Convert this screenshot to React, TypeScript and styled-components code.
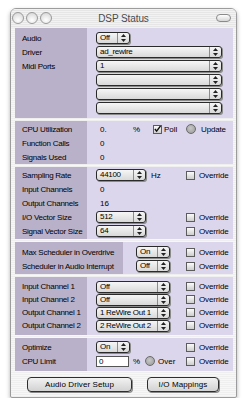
import React from 'react';
import styled, { createGlobalStyle } from 'styled-components';

const FONT = '"Liberation Sans", Arial, sans-serif';

const GlobalStyle = createGlobalStyle`
  html, body {
    margin: 0;
    padding: 0;
    background: #ffffff;
  }
  body {
    font-family: ${FONT};
    -webkit-font-smoothing: antialiased;
  }
`;

const Window = styled.div`
  box-sizing: border-box;
  width: 227px;
  margin: 8px 0 0 10px;
  border: 1px solid #9c9c9c;
  border-radius: 6px 6px 2px 2px;
  background: repeating-linear-gradient(180deg, #f7f7f7 0px, #f7f7f7 1px, #efefef 1px, #efefef 2px);
  box-shadow: 0 2px 4px rgba(0, 0, 0, 0.3);
  overflow: hidden;
`;

const TitleBar = styled.div`
  position: relative;
  height: 19px;
  display: flex;
  align-items: center;
  justify-content: center;
  background: repeating-linear-gradient(180deg, #f2f2f2 0px, #f2f2f2 1px, #e6e6e6 1px, #e6e6e6 2px);
`;

const Lights = styled.div`
  position: absolute;
  left: 1px;
  top: 3px;
  display: flex;
  gap: 2px;
`;

const Light = styled.span`
  box-sizing: border-box;
  width: 12px;
  height: 12px;
  border-radius: 50%;
  border: 1px solid #9a9a9a;
  background: radial-gradient(circle at 50% 70%, #ffffff 0%, #e4e4e4 60%, #cfcfcf 100%);
`;

const Pill = styled.span`
  position: absolute;
  right: 5px;
  top: 5px;
  box-sizing: border-box;
  width: 15px;
  height: 8px;
  border-radius: 4px;
  border: 1px solid #8a8a8a;
  background: linear-gradient(#ffffff, #d6d6d6);
`;

const Title = styled.div`
  font-size: 10px;
  color: #4a4a4a;
  letter-spacing: -0.1px;
`;

const Body = styled.div`
  padding: 0 3px 5px 4px;
`;

const Panel = styled.div<{ $lw: number; $pt: number; $pb: number }>`
  --lw: ${(p) => p.$lw}px;
  background: linear-gradient(90deg, #b9b1c9 0, #b9b1c9 var(--lw), #dcd6ec var(--lw), #dcd6ec 100%);
  padding: ${(p) => p.$pt}px 0 ${(p) => p.$pb}px;
  & + & {
    margin-top: 3px;
  }
`;

const Row = styled.div<{ $h?: number }>`
  display: grid;
  grid-template-columns: var(--lw) 1fr 47px;
  height: ${(p) => p.$h ?? 14}px;
  align-items: center;
`;

const Label = styled.div`
  padding-left: 7px;
  font-size: 8px;
  letter-spacing: -0.25px;
  color: #000;
  white-space: nowrap;
`;

const Value = styled.div<{ $pad?: number }>`
  display: flex;
  align-items: center;
  padding-left: ${(p) => p.$pad ?? 9}px;
  font-size: 8px;
  color: #000;
  white-space: nowrap;
`;

const Side = styled.div`
  display: flex;
  align-items: center;
  gap: 2px;
  font-size: 8px;
  letter-spacing: -0.15px;
  color: #000;
  white-space: nowrap;
`;

const PopupBox = styled.div<{ $w: number }>`
  box-sizing: border-box;
  width: ${(p) => p.$w}px;
  height: 12px;
  display: flex;
  border: 1px solid #2a2a2a;
  border-radius: 3px;
  background: linear-gradient(#f6f6f6, #d9d9d9);
  box-shadow: 1px 1px 0 #8a8a8a;
  overflow: hidden;
`;

const PopupText = styled.span`
  flex: 1;
  padding-left: 3px;
  font-size: 8px;
  line-height: 10px;
  letter-spacing: -0.3px;
  color: #000;
  white-space: nowrap;
  overflow: hidden;
`;

const PopupArrow = styled.span`
  width: 11px;
  display: flex;
  align-items: center;
  justify-content: center;
  border-left: 1px solid #8c8c8c;
`;

const Num = styled.span<{ $w: number }>`
  display: inline-block;
  width: ${(p) => p.$w}px;
`;

const Check = styled.span`
  box-sizing: border-box;
  width: 9px;
  height: 9px;
  display: inline-flex;
  align-items: center;
  justify-content: center;
  border: 1px solid #5c5c5c;
  background: linear-gradient(#fbfbfb, #cdcdcd);
  margin-right: 2px;
`;

const Led = styled.span`
  box-sizing: border-box;
  width: 10px;
  height: 10px;
  border-radius: 50%;
  border: 1px solid #6a6a6a;
  background: radial-gradient(circle at 45% 40%, #c8c8c8 0%, #a6a6a6 70%, #8d8d8d 100%);
  margin-right: 3px;
`;

const Field = styled.span`
  box-sizing: border-box;
  width: 33px;
  height: 11px;
  padding-left: 2px;
  border: 1px solid #555;
  background: #ffffff;
  font-size: 8px;
  line-height: 9px;
`;

const Buttons = styled.div`
  display: flex;
  gap: 15px;
  margin: 6px 0 0 12px;
`;

const Button = styled.div<{ $w: number }>`
  box-sizing: border-box;
  width: ${(p) => p.$w}px;
  height: 15px;
  display: flex;
  align-items: center;
  justify-content: center;
  border: 1px solid #2e2e2e;
  border-radius: 4px;
  background: linear-gradient(#f2f2f2, #d2d2d2);
  box-shadow: 1px 1px 0 #8a8a8a;
  font-size: 8px;
  letter-spacing: 0.1px;
  color: #000;
`;

const Arrows = () => (
  <svg width="5" height="8" viewBox="0 0 5 8">
    <polygon points="2.5,0 5,3 0,3" fill="#222" />
    <polygon points="0,5 5,5 2.5,8" fill="#222" />
  </svg>
);

const Popup = ({ w, text = '' }: { w: number; text?: string }) => (
  <PopupBox $w={w}>
    <PopupText>{text}</PopupText>
    <PopupArrow>
      <Arrows />
    </PopupArrow>
  </PopupBox>
);

const Override = () => (
  <Side>
    <Check />
    Override
  </Side>
);

const Tick = () => (
  <svg width="8" height="8" viewBox="0 0 8 8">
    <path d="M1 4 L3 6.5 L7.5 0.5" stroke="#111" strokeWidth="1.6" fill="none" />
  </svg>
);

export default function App() {
  return (
    <>
      <GlobalStyle />
      <Window>
        <TitleBar>
          <Lights>
            <Light />
            <Light />
            <Light />
          </Lights>
          <Title>DSP Status</Title>
          <Pill />
        </TitleBar>
        <Body>
          <Panel $lw={72} $pt={3} $pb={3}>
            <Row>
              <Label>Audio</Label>
              <Value><Popup w={34} text="Off" /></Value>
              <div />
            </Row>
            <Row>
              <Label>Driver</Label>
              <Value style={{ gridColumn: '2 / 4' }}><Popup w={126} text="ad_rewire" /></Value>
            </Row>
            <Row>
              <Label>Midi Ports</Label>
              <Value style={{ gridColumn: '2 / 4' }}><Popup w={126} text="1" /></Value>
            </Row>
            {[0, 1, 2].map((i) => (
              <Row key={i}>
                <Label />
                <Value style={{ gridColumn: '2 / 4' }}><Popup w={126} /></Value>
              </Row>
            ))}
          </Panel>

          <Panel $lw={72} $pt={1} $pb={0}>
            <Row>
              <Label>CPU Utilization</Label>
              <Value $pad={13}>
                <Num $w={33}>0.</Num>
                <Num $w={20}>%</Num>
                <Check><Tick /></Check>
                Poll
              </Value>
              <Side>
                <Led />
                Update
              </Side>
            </Row>
            <Row>
              <Label>Function Calls</Label>
              <Value $pad={13}>0</Value>
              <div />
            </Row>
            <Row>
              <Label>Signals Used</Label>
              <Value $pad={13}>0</Value>
              <div />
            </Row>
          </Panel>

          <Panel $lw={72} $pt={1} $pb={1}>
            <Row>
              <Label>Sampling Rate</Label>
              <Value>
                <Popup w={50} text="44100" />
                <Num $w={20} style={{ paddingLeft: 5 }}>Hz</Num>
              </Value>
              <Override />
            </Row>
            <Row>
              <Label>Input Channels</Label>
              <Value $pad={13}>0</Value>
              <div />
            </Row>
            <Row>
              <Label>Output Channels</Label>
              <Value $pad={13}>16</Value>
              <div />
            </Row>
            <Row>
              <Label>I/O Vector Size</Label>
              <Value><Popup w={50} text="512" /></Value>
              <Override />
            </Row>
            <Row>
              <Label>Signal Vector Size</Label>
              <Value><Popup w={50} text="64" /></Value>
              <Override />
            </Row>
          </Panel>

          <Panel $lw={108} $pt={3} $pb={1}>
            <Row>
              <Label>Max Scheduler in Overdrive</Label>
              <Value $pad={13}><Popup w={34} text="On" /></Value>
              <Override />
            </Row>
            <Row>
              <Label>Scheduler in Audio Interrupt</Label>
              <Value $pad={13}><Popup w={34} text="Off" /></Value>
              <Override />
            </Row>
          </Panel>

          <Panel $lw={72} $pt={3} $pb={3}>
            <Row $h={13}>
              <Label>Input Channel 1</Label>
              <Value><Popup w={74} text="Off" /></Value>
              <Override />
            </Row>
            <Row $h={13}>
              <Label>Input Channel 2</Label>
              <Value><Popup w={74} text="Off" /></Value>
              <Override />
            </Row>
            <Row $h={13}>
              <Label>Output Channel 1</Label>
              <Value><Popup w={74} text="1 ReWire Out 1" /></Value>
              <Override />
            </Row>
            <Row $h={13}>
              <Label>Output Channel 2</Label>
              <Value><Popup w={74} text="2 ReWire Out 2" /></Value>
              <Override />
            </Row>
          </Panel>

          <Panel $lw={72} $pt={2} $pb={3}>
            <Row>
              <Label>Optimize</Label>
              <Value><Popup w={34} text="On" /></Value>
              <Override />
            </Row>
            <Row>
              <Label>CPU Limit</Label>
              <Value>
                <Field>0</Field>
                <Num $w={12} style={{ paddingLeft: 4 }}>%</Num>
                <Led />
                Over
              </Value>
              <Override />
            </Row>
          </Panel>

          <Buttons>
            <Button $w={105}>Audio Driver Setup</Button>
            <Button $w={72}>I/O Mappings</Button>
          </Buttons>
        </Body>
      </Window>
    </>
  );
}
